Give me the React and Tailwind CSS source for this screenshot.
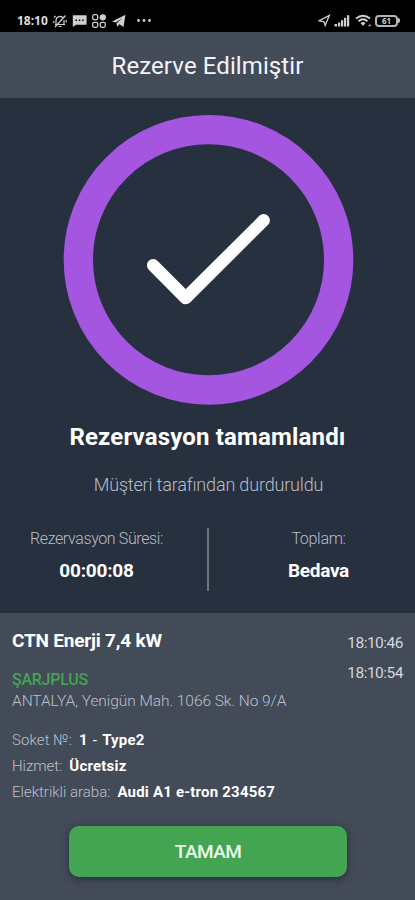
import React from "react";

function StatusBar() {
  return (
    <div className="flex h-8 shrink-0 items-center justify-between bg-black pl-[17px] pr-[15px] pt-[9px] text-[#cfcfcf]">
      <div className="flex items-center">
        <span className="w-[36px] whitespace-nowrap font-['Noto_Sans'] text-[12px] font-bold leading-4 text-[#dcdcdc]">18:10</span>
        <svg className="h-[14px] w-[14px]" viewBox="0 0 14 14" fill="none" stroke="currentColor" strokeWidth="1.2">
          <path d="M3 10.500V6.500a4 4 0 0 1 7.500-2M11 6v4.500H4.500M2 10.500h10M5.500 12.500h3M2 13 12.500 1.500M1 3.500 2.500 2M.8 7v2M13.200 6v2.500" />
        </svg>
        <svg className="ml-[5px] h-[14px] w-[15px]" viewBox="0 0 15 14" fill="currentColor">
          <path fillRule="evenodd" d="M1.500 1.200h12.500q.6 0 .6.600v8.400q0 .6-.6.600H4L.8 13V1.800q0-.6.700-.600ZM3.500 5.500V7H5V5.500Zm3.300 0V7h1.500V5.500Zm3.300 0V7h1.500V5.500Z" />
        </svg>
        <svg className="ml-[5px] h-[14px] w-[14px]" viewBox="0 0 14 14" fill="none" stroke="currentColor" strokeWidth="1.300">
          <rect x=".7" y=".7" width="5" height="5" rx="1.500" />
          <circle cx="10.800" cy="3.300" r="2.500" fill="currentColor" />
          <rect x=".7" y="8.300" width="5" height="5" rx="1.500" />
          <rect x="8.300" y="8.300" width="5" height="5" rx="1.500" />
        </svg>
        <svg className="ml-[6px] h-[14px] w-[14px]" viewBox="0 0 14 14" fill="currentColor">
          <path d="M0 7.500 13.500.8 11.500 13 7.500 10.200 5 12.800 4.700 9.200 10 4.200 3.800 8.600Z" />
        </svg>
        <svg className="ml-[10px] h-[14px] w-[16px]" viewBox="0 0 16 14" fill="currentColor">
          <circle cx="2.500" cy="6.500" r="1.400" />
          <circle cx="8" cy="6.500" r="1.400" />
          <circle cx="13.500" cy="6.500" r="1.400" />
        </svg>
      </div>
      <div className="flex items-center">
        <svg className="h-[13px] w-[13px]" viewBox="0 0 13 13" fill="none" stroke="currentColor" strokeWidth="1.300">
          <path d="M1 6.800 11.300 1.500 7.200 11.500 6 7.800Z" />
        </svg>
        <svg className="ml-[3px] h-[13px] w-[16px]" viewBox="0 0 16 13" fill="currentColor">
          <path d="M.5 10H3v2.500H.5ZM4 8.500h2.200v4H4ZM7 6.300h2.200v6.200H7ZM10 3.800h2.200v8.700h-2.200ZM13 1.200h2.200v11.300h-2.200Z" />
        </svg>
        <svg className="ml-[5px] h-[13px] w-[17px]" viewBox="0 0 17 13" fill="none" stroke="currentColor" strokeWidth="2">
          <path d="M1 4.500Q8 -1 15 4.500M3.500 7.200Q8 3.400 12.500 7.200" />
          <path d="M5.500 9Q8 6.800 10.500 9L8 12Z" fill="currentColor" stroke="none" />
          <path d="M13 12.200 15.500 9.700V12.200Z" fill="currentColor" stroke="none" />
        </svg>
        <div className="ml-[3px] flex h-[12px] w-[23px] items-center justify-center rounded-[4px] border-2 border-[#b4b4b4] font-['Noto_Sans'] text-[8px] font-bold leading-none">61</div>
        <div className="h-[5px] w-[2px] rounded-r bg-[#c4c4c4]" />
      </div>
    </div>
  );
}

function Detail({ label, value, labelClass = "" }) {
  return (
    <p className="flex h-[26px] gap-[7px] whitespace-nowrap text-[15px] leading-[26px]">
      <span className={"font-light text-[#bcc1cc] " + labelClass}>{label}</span>
      <b className="font-bold tracking-[0.2px] text-white">{value}</b>
    </p>
  );
}

export default function App() {
  return (
    <main className="flex h-[900px] w-[415px] flex-col overflow-hidden bg-[#27303f] font-[Roboto,sans-serif] text-white">
      <StatusBar />
      <header className="flex h-[66px] shrink-0 items-center justify-center bg-[#434a58] pt-[2px] text-[24px] leading-8 tracking-[0.1px] text-[#f2f4fa]">
        <h1>Rezerve Edilmiştir</h1>
      </header>

      <section className="flex h-[515px] shrink-0 flex-col items-center pt-4">
        <svg className="h-[292px] w-[292px] shrink-0" viewBox="0 0 292 292" fill="none">
          <circle cx="146.500" cy="145.800" r="130.200" stroke="#a556e1" strokeWidth="29.300" />
          <path d="M91.200 151.300 123.700 184 201.700 106.300" stroke="#fdfefd" strokeWidth="12.500" strokeLinecap="round" strokeLinejoin="round" />
        </svg>
        <h2 className="mt-[15px] h-8 whitespace-nowrap text-[24px] font-bold leading-8 tracking-[0.17px]">Rezervasyon tamamlandı</h2>
        <p className="mt-[20px] h-6 whitespace-nowrap pl-[2px] text-[18px] font-light leading-6 tracking-[-0.17px] text-[#b8bdc9]">Müşteri tarafından durduruldu</p>
        <div className="mt-[31px] flex h-[63px] w-full items-stretch">
          <div className="flex w-[207px] flex-col items-center pr-[14px]">
            <span className="h-[22px] whitespace-nowrap text-[16px] font-light leading-[22px] tracking-[-0.38px] text-[#b8bdc9]">Rezervasyon Süresi:</span>
            <strong className="mt-[9px] text-[19px] font-bold leading-6 tracking-[-0.2px]">00:00:08</strong>
          </div>
          <div className="w-[2px] bg-[#6f7682]" />
          <div className="flex flex-1 flex-col items-center pl-[13px]">
            <span className="h-[22px] text-[16px] font-light leading-[22px] tracking-[-0.3px] text-[#b8bdc9]">Toplam:</span>
            <strong className="mt-[9px] text-[19px] font-bold leading-6 tracking-[-0.3px]">Bedava</strong>
          </div>
        </div>
      </section>

      <section className="flex flex-1 flex-col bg-[#434a58] px-3 pt-4">
        <div className="flex justify-between">
          <div className="whitespace-nowrap">
            <h3 className="h-6 text-[19px] font-bold leading-6 tracking-[-0.2px]">CTN Enerji 7,4 kW</h3>
            <p className="mt-[17px] h-5 text-[16px] font-medium leading-5 tracking-[-0.25px] text-[#43a553]">ŞARJPLUS</p>
            <p className="h-[22px] text-[15.500px] font-light leading-[22px] tracking-[-0.06px] text-[#bcc1cc]">ANTALYA, Yenigün Mah. 1066 Sk. No 9/A</p>
          </div>
          <div className="-mt-px text-right text-[15.500px] leading-[30px] tracking-[-0.5px] text-[#d3d7df]">
            <p>18:10:46</p>
            <p>18:10:54</p>
          </div>
        </div>
        <div className="mt-[15px]">
          <Detail
            label="Soket №:"
            labelClass="tracking-[0.1px]"
            value={<>1<span className="mx-[5px] font-normal">-</span>Type2</>}
          />
          <Detail label="Hizmet:" value="Ücretsiz" />
          <Detail label="Elektrikli araba:" value="Audi A1 e-tron 234567" />
        </div>
        <button className="ml-[57px] mt-[21px] h-[51px] w-[278px] rounded-[10px] bg-[#43a551] text-[19px] font-medium leading-6 tracking-[-0.6px] text-[#eef8ef] shadow-[0_2px_7px_rgba(20,24,35,0.550)]">TAMAM</button>
      </section>
    </main>
  );
}
